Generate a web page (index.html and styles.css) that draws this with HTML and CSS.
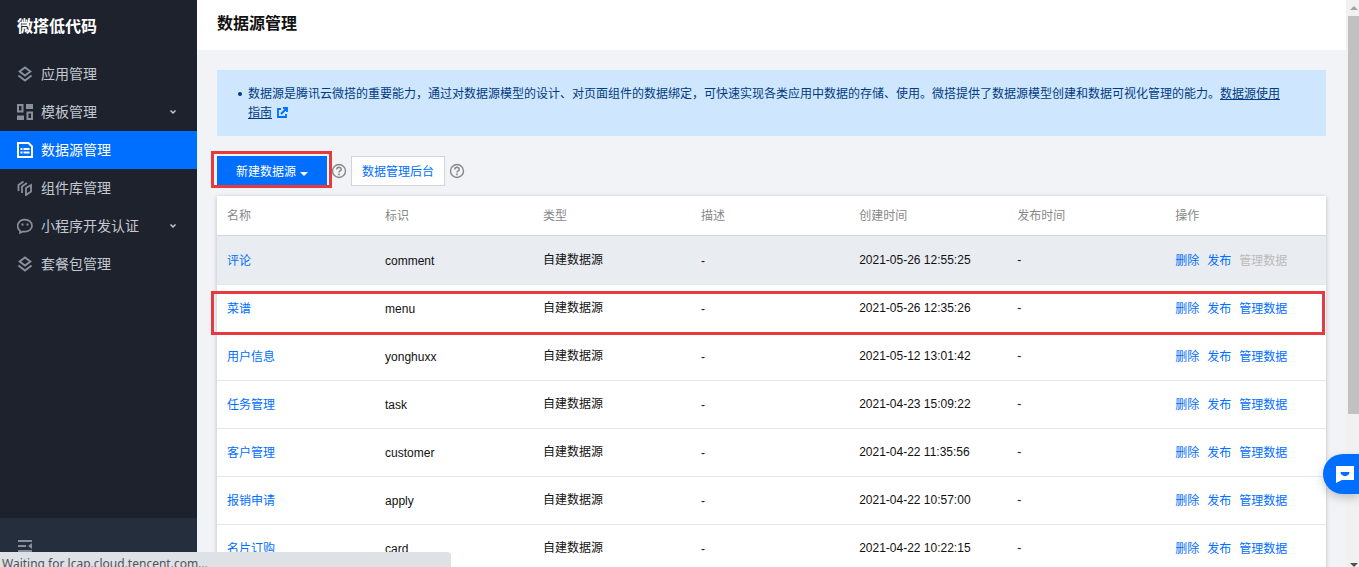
FILE: index.html
```html
<!DOCTYPE html>
<html lang="zh-CN">
<head>
<meta charset="utf-8">
<title>数据源管理</title>
<link rel="stylesheet" href="styles.css">
</head>
<body>
<svg class="defs" aria-hidden="true">
  <symbol id="layers" viewBox="0 0 16 16"><path d="M8 1.400 13.400 5.500 8 9.600 2.600 5.500Z M1.400 9.600 8 14.600 14.600 9.600" fill="none" stroke="currentColor" stroke-width="1.900"/></symbol>
  <symbol id="chevron" viewBox="0 0 8 8"><path d="M1.500 2.500 4 5 6.500 2.500" fill="none" stroke="currentColor" stroke-width="1.500"/></symbol>
  <symbol id="help" viewBox="0 0 16 16"><circle cx="8" cy="8" r="6.500" fill="none" stroke="currentColor" stroke-width="1.400"/><path d="M5.800 6.600C5.800 3.600 10.200 3.700 10.200 6.400 10.200 8 8 7.900 8 9.600" fill="none" stroke="currentColor" stroke-width="1.500"/><path d="M7.200 10.600h1.600v1.600H7.200z" fill="currentColor"/></symbol>
</svg>
<div class="app">
  <aside class="sidebar">
    <h2 class="brand">微搭低代码</h2>
    <nav class="nav">
      <a class="nav-item" href="#"><svg class="icon"><use href="#layers"/></svg><span>应用管理</span></a>
      <a class="nav-item" href="#"><svg class="icon" viewBox="0 0 16 16"><path d="M1 1h4.500v6.500H1zM10.500 8.500H15V15h-4.500z" fill="none" stroke="currentColor" stroke-width="2"/><path d="M9 0h7v5H9zM0 11.500h7V16H0z" fill="currentColor"/></svg><span>模板管理</span><svg class="chevron"><use href="#chevron"/></svg></a>
      <a class="nav-item active" href="#" aria-current="page"><svg class="icon" viewBox="0 0 16 16"><path d="M1 1h10.500L15 4.500V15H1z" fill="none" stroke="currentColor" stroke-width="2"/><path d="M3.500 6h2v2h-2zM6.500 6h6v2h-6zM3.500 9.500h2v2h-2zM6.500 9.500h6v2h-6z" fill="currentColor"/></svg><span>数据源管理</span></a>
      <a class="nav-item" href="#"><svg class="icon" viewBox="0 0 16 16"><path d="M1.500 11V5L6.500 1.500M5 13V6.500L10 3M9 8 14 5v6.500L9 15Z" fill="none" stroke="currentColor" stroke-width="1.800"/></svg><span>组件库管理</span></a>
      <a class="nav-item" href="#"><svg class="icon" viewBox="0 0 16 16"><path d="M3 14.800V12.800C-2 8.500 1.500 1.700 8 1.700c4 0 7 2.600 7 6s-3 6-7 6H5.500Z" fill="none" stroke="currentColor" stroke-width="1.700"/><path d="M4.500 5.500h2v2h-2zM9.500 5.500h2v2h-2z" fill="currentColor"/></svg><span>小程序开发认证</span><svg class="chevron"><use href="#chevron"/></svg></a>
      <a class="nav-item" href="#"><svg class="icon"><use href="#layers"/></svg><span>套餐包管理</span></a>
    </nav>
    <div class="collapse-bar"><button class="collapse" aria-label="收起菜单"><svg class="icon" viewBox="0 0 16 16"><path d="M1 2h14v2H1zM1 7h8v2H1zM1 12h14v2H1zM15 5v6l-4-3z" fill="currentColor"/></svg></button></div>
  </aside>

  <main class="main">
    <header class="page-head"><h1>数据源管理</h1></header>
    <div class="content">
      <ul class="notice">
        <li>数据源是腾讯云微搭的重要能力，通过对数据源模型的设计、对页面组件的数据绑定，可快速实现各类应用中数据的存储、使用。微搭提供了数据源模型创建和数据可视化管理的能力。<a href="#">数据源使用指南</a><svg class="external" viewBox="0 0 12 12"><path d="M5 2H2v8h8V7M7 1h4v4M11 1 5 7" fill="none" stroke="currentColor" stroke-width="1.800"/></svg></li>
      </ul>
      <div class="toolbar">
        <div class="marked"><button class="btn primary">新建数据源<span class="caret"></span></button><div class="mark mark-button"></div></div>
        <svg class="help"><use href="#help"/></svg>
        <button class="btn outline">数据管理后台</button>
        <svg class="help"><use href="#help"/></svg>
      </div>
      <div class="table-card">
        <table>
          <thead><tr><th>名称</th><th>标识</th><th>类型</th><th>描述</th><th>创建时间</th><th>发布时间</th><th class="last">操作</th></tr></thead>
          <tbody>
            <tr class="hovered"><td><a href="#">评论</a></td><td>comment</td><td class="raised">自建数据源</td><td>-</td><td class="raised">2021-05-26 12:55:25</td><td class="raised">-</td><td><div class="actions"><button>删除</button><button>发布</button><button disabled>管理数据</button></div></td></tr>
            <tr><td><a href="#">菜谱</a></td><td>menu</td><td class="raised">自建数据源</td><td>-</td><td class="raised">2021-05-26 12:35:26</td><td class="raised">-</td><td><div class="actions"><button>删除</button><button>发布</button><button>管理数据</button></div></td></tr>
            <tr><td><a href="#">用户信息</a></td><td>yonghuxx</td><td class="raised">自建数据源</td><td>-</td><td class="raised">2021-05-12 13:01:42</td><td class="raised">-</td><td><div class="actions"><button>删除</button><button>发布</button><button>管理数据</button></div></td></tr>
            <tr><td><a href="#">任务管理</a></td><td>task</td><td class="raised">自建数据源</td><td>-</td><td class="raised">2021-04-23 15:09:22</td><td class="raised">-</td><td><div class="actions"><button>删除</button><button>发布</button><button>管理数据</button></div></td></tr>
            <tr><td><a href="#">客户管理</a></td><td>customer</td><td class="raised">自建数据源</td><td>-</td><td class="raised">2021-04-22 11:35:56</td><td class="raised">-</td><td><div class="actions"><button>删除</button><button>发布</button><button>管理数据</button></div></td></tr>
            <tr><td><a href="#">报销申请</a></td><td>apply</td><td class="raised">自建数据源</td><td>-</td><td class="raised">2021-04-22 10:57:00</td><td class="raised">-</td><td><div class="actions"><button>删除</button><button>发布</button><button>管理数据</button></div></td></tr>
            <tr><td><a href="#">名片订购</a></td><td>card</td><td class="raised">自建数据源</td><td>-</td><td class="raised">2021-04-22 10:22:15</td><td class="raised">-</td><td><div class="actions"><button>删除</button><button>发布</button><button>管理数据</button></div></td></tr>
          </tbody>
        </table>
        <div class="mark mark-row"></div>
      </div>
    </div>
  </main>

  <div class="scrollbar" aria-hidden="true"><span class="arrow up"></span><span class="thumb"></span><span class="arrow down"></span></div>
</div>
<button class="chat" aria-label="在线咨询"><svg viewBox="0 0 18 18"><path d="M0 0h18v14H6l-6 3z" fill="#fff"/><path d="M4.500 6h9c0 5.500-9 5.500-9 0z" fill="#006eff"/></svg></button>
<div class="status">Waiting for lcap.cloud.tencent.com...</div>
</body>
</html>
```

FILE: styles.css
```css
* { box-sizing: border-box; }
body {
  margin: 0;
  overflow: hidden;
  background: #f2f3f7;
  color: #111;
  font: 12px/18px "Liberation Sans", "Noto Sans CJK SC", sans-serif;
}
h1, h2, ul { margin: 0; padding: 0; }
a { color: #006eff; text-decoration: none; }
button { border: 0; padding: 0; background: none; font: inherit; color: #006eff; cursor: pointer; }
.defs { position: absolute; width: 0; height: 0; }

.app { display: grid; grid-template-columns: 197px 1fr 13px; height: 100vh; }

.sidebar { display: flex; flex-direction: column; background: #1e222d; color: #c3c8d0; }
.brand { padding: 15px 17px 16px; font-size: 16px; line-height: 24px; color: #fff; }
.nav { flex: 1; }
.nav-item {
  display: flex;
  align-items: center;
  gap: 8px;
  height: 38px;
  padding: 0 20px 0 17px;
  color: inherit;
  font-size: 14px;
}
.icon { width: 16px; height: 16px; color: #89909b; }
.chevron { width: 8px; height: 8px; margin-left: auto; }
.active { background: #006eff; color: #fff; }
.active .icon { color: #fff; }
.collapse-bar { height: 49px; padding: 20px 17px; background: #242e3d; }
.collapse { display: block; height: 16px; }
.collapse .icon { display: block; }

.main { overflow: hidden; min-width: 0; }
.page-head { padding: 12px 20px 14px; background: #fff; }
.page-head h1 { font-size: 16px; line-height: 24px; }
.content { padding: 20px; }

.notice { padding: 15px 40px 13px 31px; background: #cfe6ff; color: #003b80; line-height: 19px; list-style: none; }
.notice li { position: relative; }
.notice li::before { content: ""; position: absolute; left: -10px; top: 7px; width: 4px; height: 4px; border-radius: 50%; background: currentColor; }
.notice a { color: inherit; text-decoration: underline; }
.external { width: 12px; height: 12px; margin-left: 4px; vertical-align: -2px; color: #006eff; }

.toolbar { display: flex; align-items: center; gap: 4px; margin: 20px 0 10px; }
.btn { height: 30px; padding: 2px 10px 0; display: flex; align-items: center; justify-content: center; }
.primary { width: 110px; gap: 4px; background: #006eff; color: #fff; }
.caret { margin-top: 4px; border: 4px solid transparent; border-top-color: #fff; border-bottom: 0; }
.outline { border: 1px solid #cfd5de; background: #fff; }
.help { width: 16px; height: 16px; color: #888; }
.marked { position: relative; }
.mark { position: absolute; border: 3px solid #e63a3f; pointer-events: none; }
.mark-button { inset: -5px -5px -2px -6px; }
.mark-row { top: 95px; left: -6px; right: 1px; height: 44px; }

.table-card { position: relative; background: #fff; box-shadow: 0 1px 4px rgba(54, 58, 80, .3); }
table { width: 100%; table-layout: fixed; border-collapse: separate; border-spacing: 0; }
th, td { padding: 0 10px; text-align: left; }
th { width: 14.25%; height: 40px; padding-top: 1px; border-bottom: 1px solid #cfd5de; color: #888; font-weight: 400; }
.last { width: auto; }
td { height: 48px; border-bottom: 1px solid #e5e8ed; }
td.raised { padding-bottom: 2px; }
.hovered td { height: 49px; padding-top: 1px; background: #e9ecf1; }
.actions { display: flex; gap: 8px; white-space: nowrap; }
.actions button:disabled { color: #bbb; }

.scrollbar { display: flex; flex-direction: column; align-items: center; padding: 6px 0 0 2px; background: #f1f1f1; }
.arrow { border: 4px solid transparent; }
.up { border-top: 0; border-bottom-color: #a3a3a3; }
.down { margin-top: auto; border-bottom: 0; border-top-color: #505050; }
.thumb { width: 100%; height: 71%; margin-top: 6px; background: #c1c1c1; }

.chat {
  position: fixed;
  right: 0;
  bottom: 73px;
  width: 36px;
  height: 40px;
  padding: 1px 0 0 13px;
  border-radius: 20px 0 0 20px;
  background: #006eff;
  box-shadow: 0 4px 10px rgba(0, 0, 0, .2);
}
.chat svg { display: block; width: 18px; height: 18px; }
.status {
  position: fixed;
  left: 0;
  bottom: 0;
  width: 451px;
  height: 15px;
  padding: 3px 2px 0;
  overflow: hidden;
  border-top-right-radius: 4px;
  background: #dee1e6;
  color: #505357;
  font-family: "Noto Sans", sans-serif;
}
```
